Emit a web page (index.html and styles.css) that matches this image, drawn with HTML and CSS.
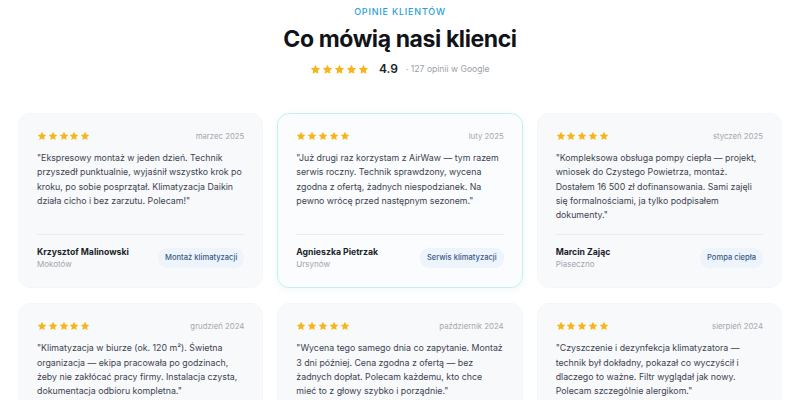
FILE: index.html
```html
<!DOCTYPE html>
<html lang="pl">
<head>
<meta charset="utf-8">
<link rel="stylesheet" href="styles.css">
</head>
<body>
<svg class="defs" width="0" height="0" aria-hidden="true">
  <symbol id="star" viewBox="0 0 24 24"><path d="M12 1.8l3.1 6.6 7.2.9-5.3 5 1.4 7.1L12 17.9l-6.4 3.5 1.4-7.1-5.3-5 7.2-.9z"/></symbol>
</svg>
<section class="reviews">
  <header class="head">
    <p class="eyebrow">OPINIE KLIENTÓW</p>
    <h1 class="title">Co mówią nasi klienci</h1>
    <div class="summary">
      <span class="stars big"><svg><use href="#star"/></svg><svg><use href="#star"/></svg><svg><use href="#star"/></svg><svg><use href="#star"/></svg><svg><use href="#star"/></svg></span>
      <span class="score">4.9</span>
      <span class="count">· 127 opinii w Google</span>
    </div>
  </header>

  <div class="grid">
    <article class="card">
      <div class="top"><span class="stars"><svg><use href="#star"/></svg><svg><use href="#star"/></svg><svg><use href="#star"/></svg><svg><use href="#star"/></svg><svg><use href="#star"/></svg></span><span class="date">marzec 2025</span></div>
      <p class="text">"Ekspresowy montaż w jeden dzień. Technik przyszedł punktualnie, wyjaśnił wszystko krok po kroku, po sobie posprzątał. Klimatyzacja Daikin działa cicho i bez zarzutu. Polecam!"</p>
      <div class="foot">
        <div class="who"><span class="name">Krzysztof Malinowski</span><span class="place">Mokotów</span></div>
        <span class="chip">Montaż klimatyzacji</span>
      </div>
    </article>

    <article class="card featured">
      <div class="top"><span class="stars"><svg><use href="#star"/></svg><svg><use href="#star"/></svg><svg><use href="#star"/></svg><svg><use href="#star"/></svg><svg><use href="#star"/></svg></span><span class="date">luty 2025</span></div>
      <p class="text">"Już drugi raz korzystam z AirWaw — tym razem serwis roczny. Technik sprawdzony, wycena zgodna z ofertą, żadnych niespodzianek. Na pewno wrócę przed następnym sezonem."</p>
      <div class="foot">
        <div class="who"><span class="name">Agnieszka Pietrzak</span><span class="place">Ursynów</span></div>
        <span class="chip">Serwis klimatyzacji</span>
      </div>
    </article>

    <article class="card">
      <div class="top"><span class="stars"><svg><use href="#star"/></svg><svg><use href="#star"/></svg><svg><use href="#star"/></svg><svg><use href="#star"/></svg><svg><use href="#star"/></svg></span><span class="date">styczeń 2025</span></div>
      <p class="text">"Kompleksowa obsługa pompy ciepła — projekt, wniosek do Czystego Powietrza, montaż. Dostałem 16 500 zł dofinansowania. Sami zajęli się formalnościami, ja tylko podpisałem dokumenty."</p>
      <div class="foot">
        <div class="who"><span class="name">Marcin Zając</span><span class="place">Piaseczno</span></div>
        <span class="chip">Pompa ciepła</span>
      </div>
    </article>

    <article class="card">
      <div class="top"><span class="stars"><svg><use href="#star"/></svg><svg><use href="#star"/></svg><svg><use href="#star"/></svg><svg><use href="#star"/></svg><svg><use href="#star"/></svg></span><span class="date">grudzień 2024</span></div>
      <p class="text">"Klimatyzacja w biurze (ok. 120 m²). Świetna organizacja — ekipa pracowała po godzinach, żeby nie zakłócać pracy firmy. Instalacja czysta, dokumentacja odbioru kompletna."</p>
      <div class="foot">
        <div class="who"><span class="name">Tomasz Wieczorek</span><span class="place">Wola</span></div>
        <span class="chip">Montaż klimatyzacji</span>
      </div>
    </article>

    <article class="card">
      <div class="top"><span class="stars"><svg><use href="#star"/></svg><svg><use href="#star"/></svg><svg><use href="#star"/></svg><svg><use href="#star"/></svg><svg><use href="#star"/></svg></span><span class="date">październik 2024</span></div>
      <p class="text">"Wycena tego samego dnia co zapytanie. Montaż 3 dni później. Cena zgodna z ofertą — bez żadnych dopłat. Polecam każdemu, kto chce mieć to z głowy szybko i porządnie."</p>
      <div class="foot">
        <div class="who"><span class="name">Katarzyna Nowak</span><span class="place">Bemowo</span></div>
        <span class="chip">Montaż klimatyzacji</span>
      </div>
    </article>

    <article class="card">
      <div class="top"><span class="stars"><svg><use href="#star"/></svg><svg><use href="#star"/></svg><svg><use href="#star"/></svg><svg><use href="#star"/></svg><svg><use href="#star"/></svg></span><span class="date">sierpień 2024</span></div>
      <p class="text">"Czyszczenie i dezynfekcja klimatyzatora — technik był dokładny, pokazał co wyczyścił i dlaczego to ważne. Filtr wyglądał jak nowy. Polecam szczególnie alergikom."</p>
      <div class="foot">
        <div class="who"><span class="name">Paweł Kowalski</span><span class="place">Mokotów</span></div>
        <span class="chip">Serwis klimatyzacji</span>
      </div>
    </article>
  </div>
</section>
</body>
</html>
```

FILE: styles.css
```css
* { box-sizing: border-box; }
html, body { margin: 0; padding: 0; background: #ffffff; }
body {
  font-family: Inter, "Noto Sans", sans-serif;
  color: #1b1f2a;
}
.defs { position: absolute; width: 0; height: 0; overflow: hidden; }
.reviews {
  width: 800px;
  padding: 5px 18px 0;
}
.head {
  display: flex;
  flex-direction: column;
  align-items: center;
}
.eyebrow {
  margin: 0;
  font-size: 9px;
  font-weight: 500;
  letter-spacing: 0.8px;
  color: #2a9fd8;
  line-height: 13px;
}
.title {
  margin: 7px 0 0;
  font-size: 23px;
  line-height: 28px;
  font-weight: 700;
  letter-spacing: -0.4px;
  color: #111318;
}
.summary {
  margin-top: 9px;
  display: flex;
  align-items: center;
  gap: 9px;
  line-height: 14px;
}
.stars {
  display: flex;
  gap: 0.8px;
  color: #f7b519;
  fill: currentColor;
}
.stars svg { width: 10px; height: 10px; display: block; }
.stars.big svg { width: 11px; height: 11px; }
.stars.big { gap: 0.9px; }
.score { font-size: 12px; font-weight: 600; color: #1b1f2a; margin-left: 1px; }
.count { font-size: 8.6px; color: #9aa0a8; margin-left: -1px; }

.grid {
  margin-top: 37px;
  display: grid;
  grid-template-columns: repeat(3, 1fr);
  column-gap: 14px;
  row-gap: 15px;
}
.card {
  background: #f8f9fb;
  border: 1px solid #f4f6f9;
  border-radius: 12px;
  padding: 16px 18px 17px;
  display: flex;
  flex-direction: column;
}
.card.featured {
  background: #fafcfd;
  border-color: #c7edf2;
  box-shadow: 0 2px 8px rgba(120, 200, 215, 0.12);
}
.top {
  display: flex;
  justify-content: space-between;
  align-items: center;
  height: 12px;
}
.date { font-size: 7.8px; color: #a3a7ae; }
.text {
  margin: 9px 0 0;
  font-size: 8.8px;
  line-height: 14.3px;
  color: #3d4350;
  flex: 1;
}
.foot {
  margin-top: 12px;
  border-top: 1px solid #e9ecf0;
  padding-top: 11px;
  display: flex;
  justify-content: space-between;
  align-items: center;
}
.who { display: flex; flex-direction: column; }
.name { font-size: 8.7px; font-weight: 700; color: #1b1f2a; line-height: 12px; white-space: nowrap; }
.place { font-size: 8px; color: #a0a5ad; line-height: 12px; white-space: nowrap; }
.chip {
  font-size: 7.6px;
  font-weight: 500;
  color: #3b5a86;
  background: #eef4fb;
  padding: 4px 7px;
  border-radius: 9px;
  line-height: 12px;
  white-space: nowrap;
}
```
